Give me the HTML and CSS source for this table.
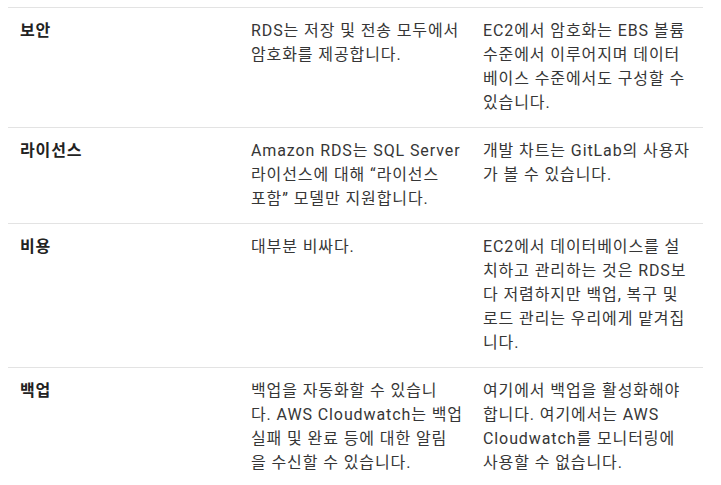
FILE: index.html
```html
<!DOCTYPE html>
<html lang="ko">
<head>
<meta charset="utf-8">
<link rel="stylesheet" href="styles.css">
</head>
<body>
<table class="cmp">
  <colgroup>
    <col class="c1">
    <col class="c2">
    <col class="c3">
  </colgroup>
  <tbody>
    <tr>
      <th>보안</th>
      <td>RDS는 저장 및 전송 모두에서<br>암호화를 제공합니다.</td>
      <td>EC2에서 암호화는 EBS 볼륨<br>수준에서 이루어지며 데이터<br>베이스 수준에서도 구성할 수<br>있습니다.</td>
    </tr>
    <tr>
      <th>라이선스</th>
      <td>Amazon RDS는 SQL Server<br>라이선스에 대해 “라이선스<br>포함” 모델만 지원합니다.</td>
      <td>개발 차트는 GitLab의 사용자<br>가 볼 수 있습니다.</td>
    </tr>
    <tr>
      <th>비용</th>
      <td>대부분 비싸다.</td>
      <td>EC2에서 데이터베이스를 설<br>치하고 관리하는 것은 RDS보<br>다 저렴하지만 백업, 복구 및<br>로드 관리는 우리에게 맡겨집<br>니다.</td>
    </tr>
    <tr>
      <th>백업</th>
      <td>백업을 자동화할 수 있습니<br>다. AWS Cloudwatch는 백업<br>실패 및 완료 등에 대한 알림<br>을 수신할 수 있습니다.</td>
      <td>여기에서 백업을 활성화해야<br>합니다. 여기에서는 AWS<br>Cloudwatch를 모니터링에<br>사용할 수 없습니다.</td>
    </tr>
  </tbody>
</table>
</body>
</html>
```
FILE: styles.css
```css
html, body {
  margin: 0;
  padding: 0;
  background: #fff;
}
body {
  padding: 7px 18px 0 8px;
  font-family: Roboto, "Noto Sans CJK KR", sans-serif;
  font-size: 16px;
  line-height: 24px;
  color: #363636;
  letter-spacing: 0.9px;
}
.cmp {
  width: 695px;
  border-collapse: collapse;
  table-layout: fixed;
}
.c1 { width: 231px; }
.c2 { width: 232px; }
.c3 { width: 232px; }
.cmp tr {
  border-top: 1px solid #e3e3e3;
}
.cmp th,
.cmp td {
  vertical-align: top;
  text-align: left;
  padding: 11px 2px 12px 12px;
  white-space: nowrap;
}
.cmp th {
  font-weight: 600;
  color: #222;
}
.cmp td {
  font-weight: 400;
}
```
